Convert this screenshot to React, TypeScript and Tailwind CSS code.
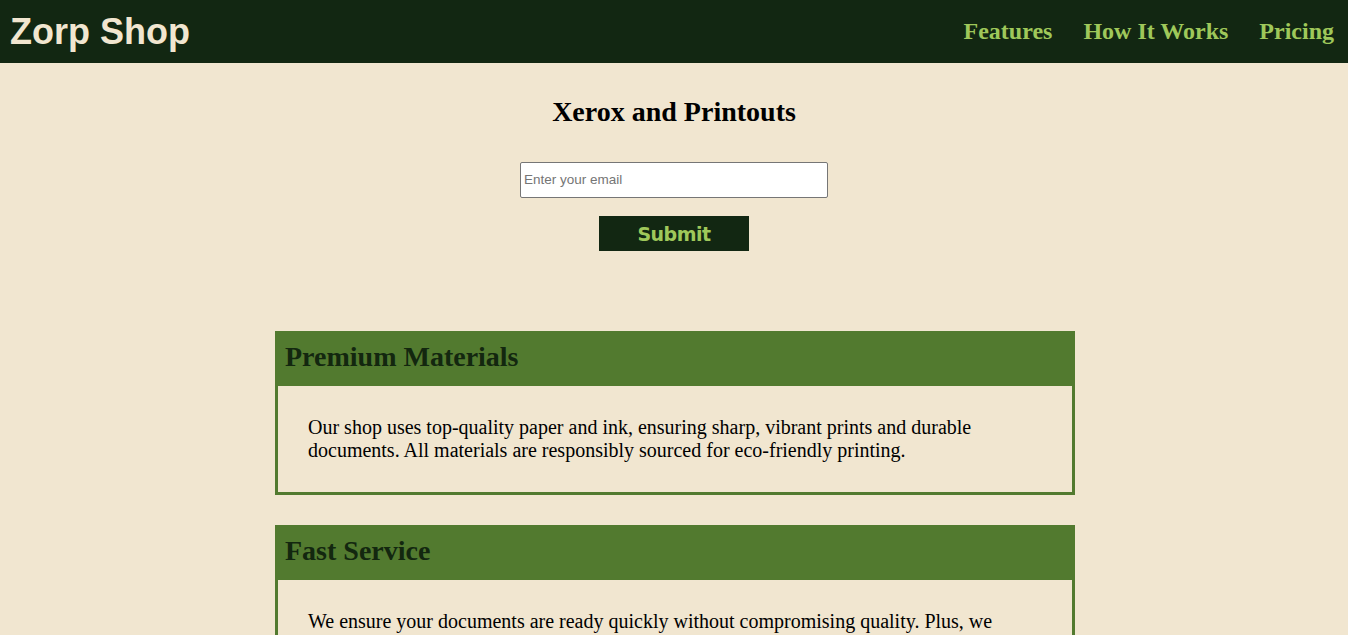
const serif = "font-['Liberation_Serif','Times_New_Roman',serif]";

const features = [
  {
    title: "Premium Materials",
    text: "Our shop uses top-quality paper and ink, ensuring sharp, vibrant prints and durable documents. All materials are responsibly sourced for eco-friendly printing.",
  },
  {
    title: "Fast Service",
    text: "We ensure your documents are ready quickly without compromising quality. Plus, we provide same-day pickup and delivery options for urgent orders.",
  },
  {
    title: "Affordable Pricing",
    text: "Competitive rates for every job, from a single page to bulk orders, with discounts for students and small businesses.",
  },
];

export default function App() {
  return (
    <div className={`min-h-screen bg-[#f1e6d0] text-black ${serif}`}>
      <header className="flex h-[63px] items-center justify-between bg-[#122712] pl-[10px] pr-[14px]">
        <div className="font-['Liberation_Sans',Arial,sans-serif] text-[36px] font-bold leading-none text-[#f1e6d0]">
          Zorp Shop
        </div>
        <nav className="-mt-[2px] flex items-center gap-[31px] text-[24px] font-bold text-[#9fc85a]">
          <a href="#features">Features</a>
          <a href="#how">How It Works</a>
          <a href="#pricing">Pricing</a>
        </nav>
      </header>

      <main className="flex flex-col items-center pt-[33px]">
        <h1 className="text-[28px] font-bold leading-[32px]">Xerox and Printouts</h1>

        <form className="mt-[34px] flex flex-col items-center gap-[18px]" onSubmit={(e) => e.preventDefault()}>
          <input
            type="email"
            placeholder="Enter your email"
            className="h-[36px] w-[308px] rounded-[2px] border border-[#767676] bg-white px-[3px] pb-[2px] font-['Liberation_Sans',Arial,sans-serif] text-[13.5px] placeholder:text-[#757575]"
          />
          <button
            type="submit"
            className="h-[35px] w-[150px] bg-[#122712] pt-[1px] font-['DejaVu_Sans',Verdana,sans-serif] text-[19px] font-bold tracking-[-0.5px] text-[#9fc85a]"
          >
            Submit
          </button>
        </form>

        <section id="features" className="ml-[2px] mt-[80px] flex w-[800px] flex-col gap-[30px]">
          {features.map((f) => (
            <div key={f.title} className="border-[3px] border-[#527a2f]">
              <h2 className="bg-[#527a2f] px-[7px] pb-[13px] pt-[7px] text-[28px] font-bold leading-[32px] text-[#13270f]">
                {f.title}
              </h2>
              <p className="px-[30px] py-[30px] text-[20px] leading-[23px]">{f.text}</p>
            </div>
          ))}
        </section>
      </main>
    </div>
  );
}
